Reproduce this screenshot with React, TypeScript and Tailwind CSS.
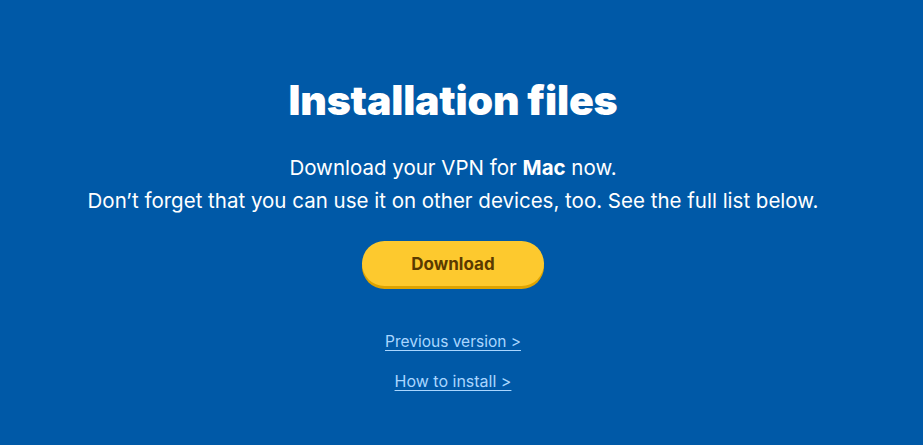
export default function App() {
  return (
    <div className="w-full h-[445px] bg-[#0059a7] pr-[17px] flex flex-col items-center text-white font-['Inter',sans-serif]">
      <h1 className="mt-[74px] text-[41px] leading-[52px] font-black tracking-[-0.2px]">Installation files</h1>
      <p className="mt-[25px] text-[20.5px] leading-[33px] text-center">
        Download your VPN for <strong className="font-bold">Mac</strong> now.
        <br />
        Don’t forget that you can use it on other devices, too. See the full list below.
      </p>
      <button
        type="button"
        className="mt-[24px] w-[182px] h-[45px] pt-[3px] rounded-full bg-[#fdc92e] shadow-[0_3px_0_#dea300] text-[#5a3a00] text-[17px] font-bold"
      >
        Download
      </button>
      <a href="#" className="mt-[46px] text-[15.5px] leading-[20px] text-[#a9d6ff] underline underline-offset-[3px]">
        Previous version &gt;
      </a>
      <a href="#" className="mt-[19px] text-[16px] leading-[20px] text-[#a9d6ff] underline underline-offset-[3px]">
        How to install &gt;
      </a>
    </div>
  )
}
